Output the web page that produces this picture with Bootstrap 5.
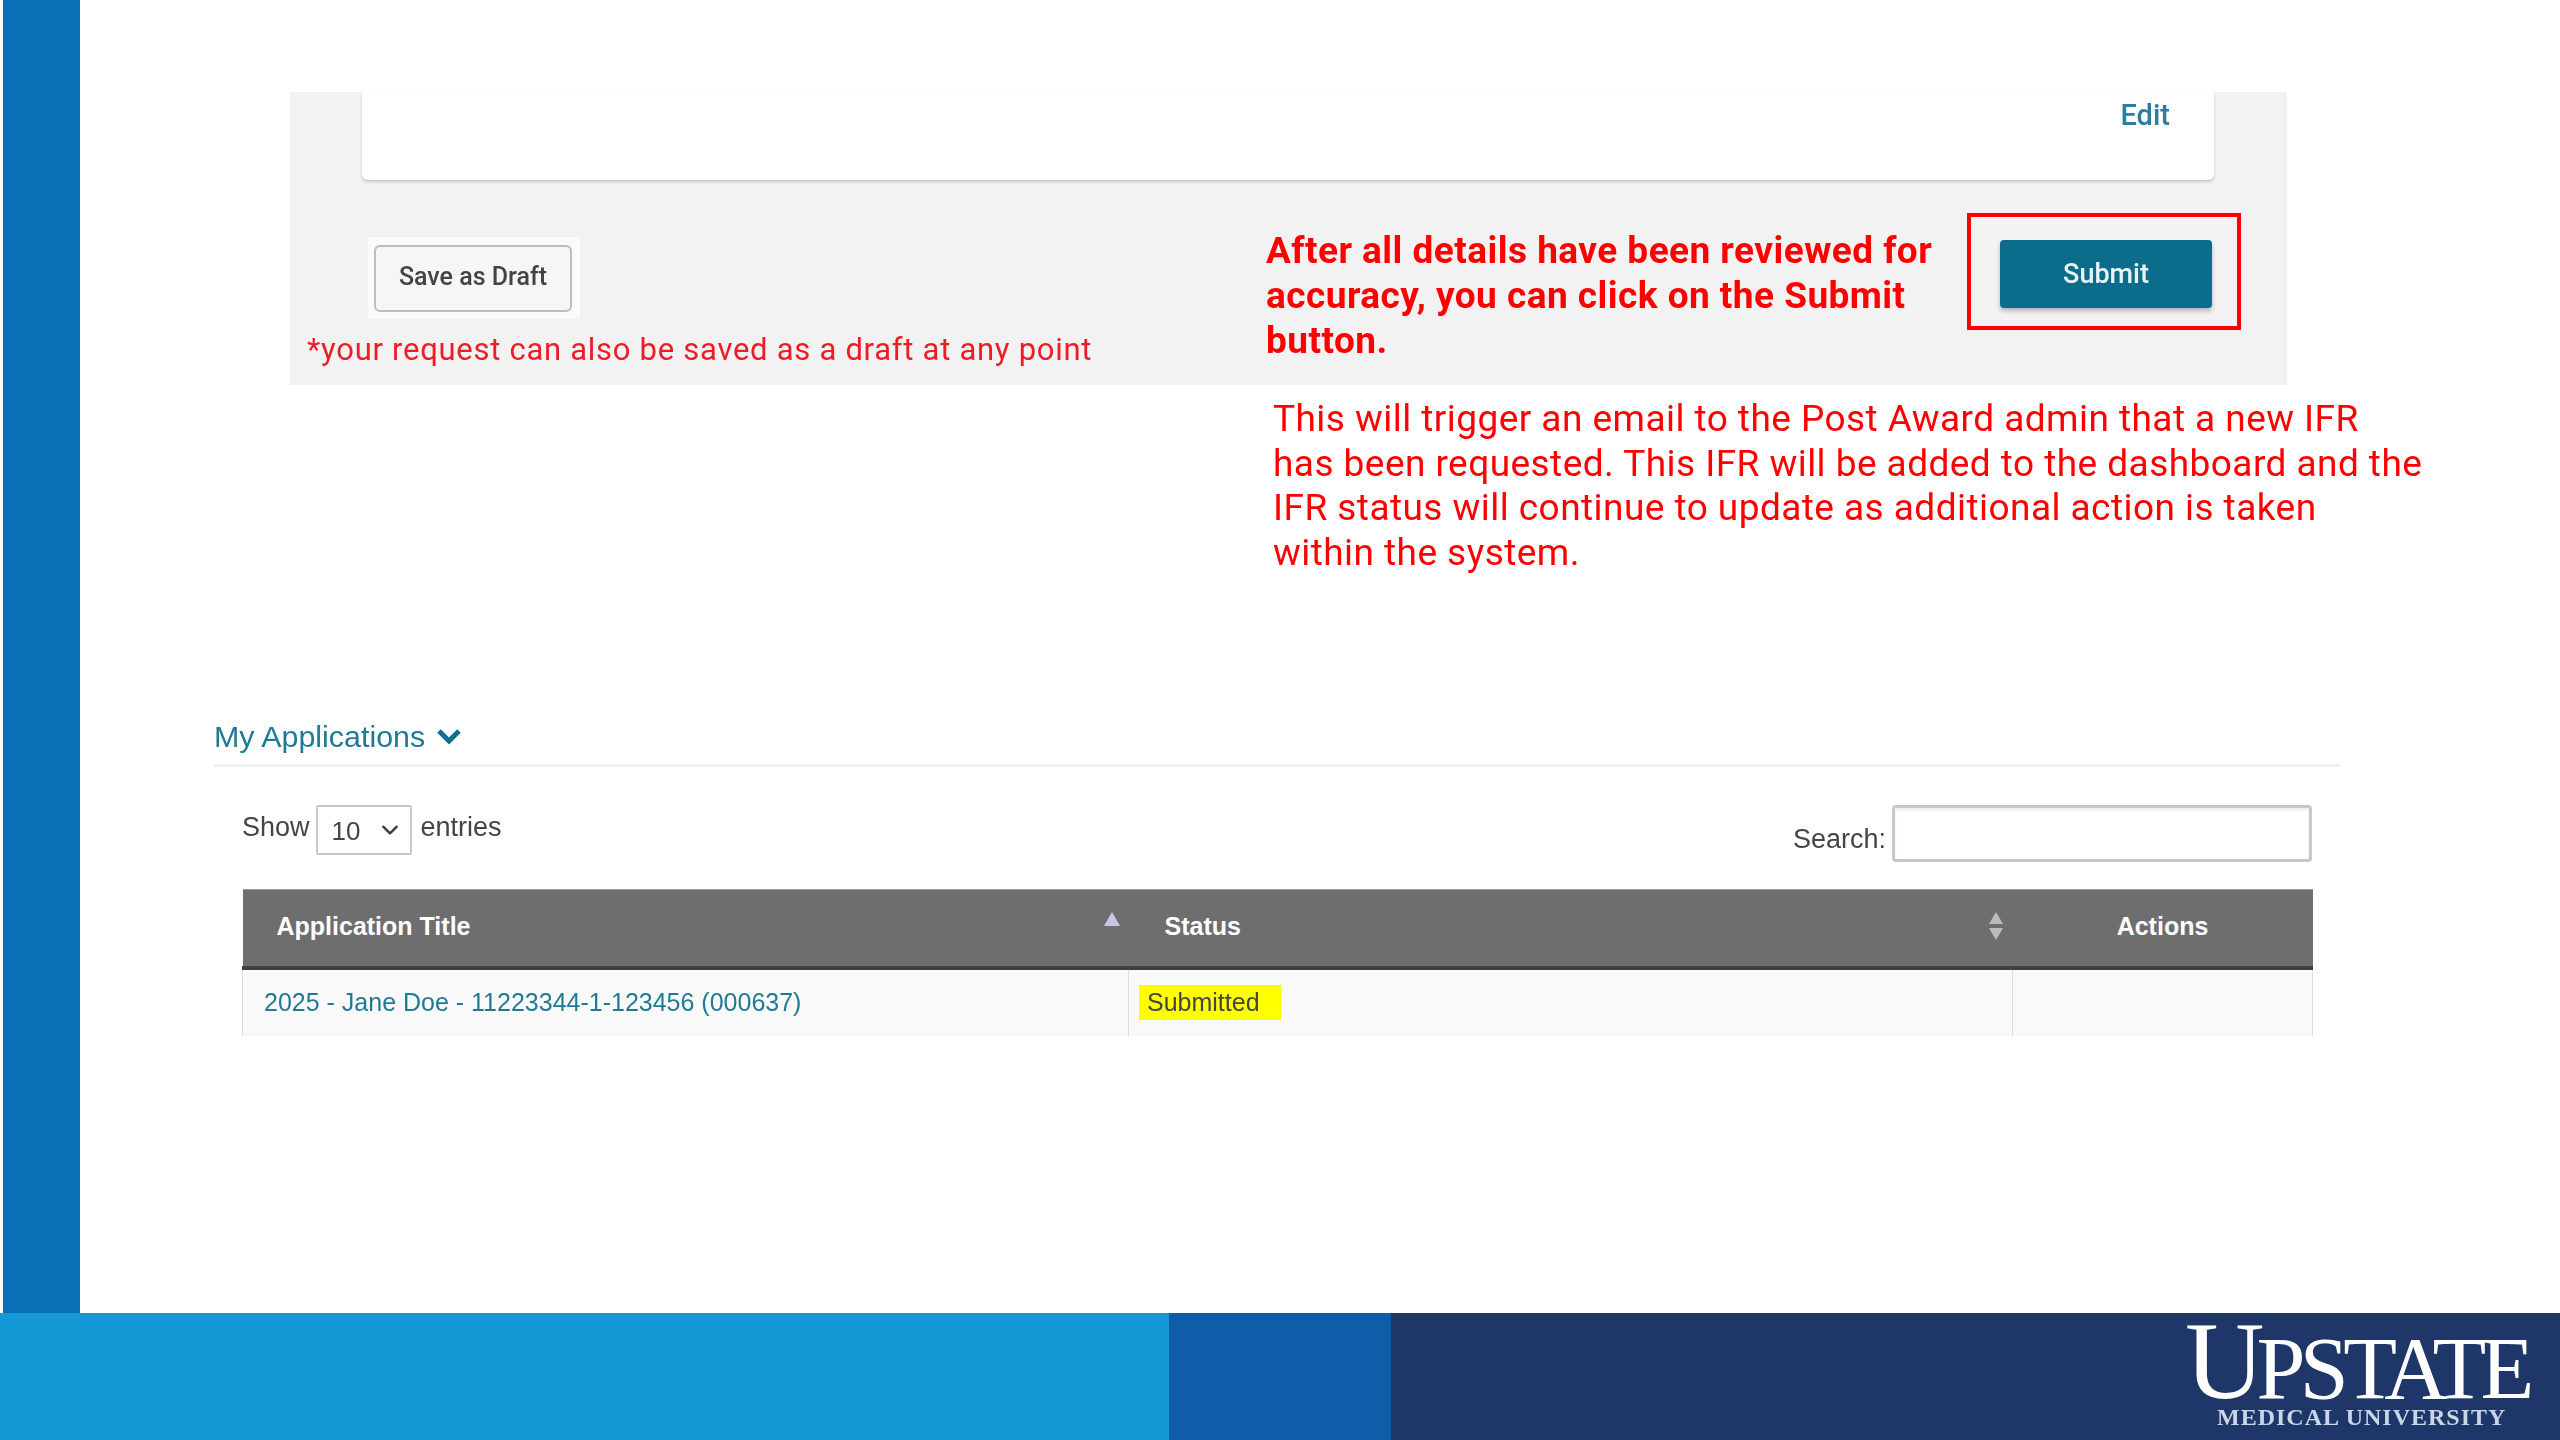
<!DOCTYPE html>
<html lang="en">
<head>
<meta charset="utf-8">
<title>Submit IFR</title>
<link href="https://cdn.jsdelivr.net/npm/bootstrap@5.3.0/dist/css/bootstrap.min.css" rel="stylesheet">
<style>
html,body{margin:0;background:#fff}
.slide-page{width:2560px;height:1440px;overflow:hidden;filter:blur(.6px)}
.slide-top{height:1313px}
.side-strip{width:77px;margin-left:3px;background:#0a70b8;flex:none}
.slide-main{width:2480px;padding-top:92px}
.gray-panel{margin-left:210px;width:1997px;height:293px;background:#f2f2f2;font-family:Roboto,sans-serif}
.top-card{margin:0 73px 0 72px;height:88px;background:#fff;border-radius:0 0 6px 6px;box-shadow:0 2px 3px rgba(0,0,0,.18);padding:3px 44px 0 0;text-align:right}
.edit-link{color:#2a7f9e;font-size:29px;font-weight:500;line-height:40px;text-decoration:none}
.action-row{margin-top:33px;padding-left:17px}
.draft-col{width:959px;padding-top:24px}
.draft-halo{margin-left:61px;width:212px;height:82px;background:#fafafa;padding:8px 6px}
.draft-btn{width:198px;height:67px;background:#f6f6f6;border:2px solid #bdbdbd;border-radius:6px;color:#444;font-size:25px;font-weight:500;padding:0 0 3px;--bs-btn-hover-bg:#eee;--bs-btn-hover-color:#444;--bs-btn-hover-border-color:#bdbdbd}
.draft-note{color:#ee1c25;font-size:31px;line-height:40px;margin-top:11px;white-space:nowrap;letter-spacing:.72px}
.bold-note{width:701px;padding-top:15px;color:#f00;font-size:37px;font-weight:700;line-height:45px;white-space:nowrap;letter-spacing:.46px}
.red-box{width:274px;height:117px;border:4px solid #f00;padding:23px 0 0 29px}
.submit-btn{width:212px;height:68px;background:#0b6c8c;border:0;border-radius:4px;color:#e8f3f6;font-size:27px;font-weight:500;padding:0;box-shadow:0 3px 4px rgba(0,0,0,.25);--bs-btn-hover-bg:#0b6c8c;--bs-btn-hover-color:#e8f3f6}
.email-note{margin:12px 0 0 1193px;color:#f00;font-family:Roboto,sans-serif;font-size:37px;line-height:44.6px;white-space:nowrap;letter-spacing:.45px}
.apps-section{margin:141px 0 0 134px;width:2126px;font-family:"Liberation Sans",Arial,sans-serif}
.apps-head{height:51px;border-bottom:3px solid #f0f0f0;color:#1f7a96;font-size:30.4px;line-height:40px}
.head-chevron{margin-left:4px}
.apps-controls{padding:38px 28px 0;height:95px;color:#444;font-size:27px}
.show-text{margin:2px 6px 0 0}
.entries-text{margin:2px 0 0 9px}
.entries-pick{width:96px;height:50px;border:2px solid #c8c8c8;border-radius:2px;padding:2px 10px 0 14px;font-size:26px;color:#444;background-position:right 8px center;background-size:24px 18px}
.search-text{margin:14px -2px 0 0}
.search-box{width:420px;height:57px;border:3px solid #c8c8c8;border-radius:4px;box-shadow:inset 0 2px 3px rgba(0,0,0,.08)}
.apps-table{margin:27px 28px 0;width:2070px;table-layout:fixed;font-size:25px;--bs-table-bg:transparent}
.apps-table thead th{height:78px;background:#6e6e6e;color:#fff;font-weight:700;border:0;border-top:1px solid #999;border-bottom:4px solid #3f3f3f;vertical-align:middle;position:relative;padding:0 0 3px 34px}
.apps-table thead th.col-status{padding-left:36px}
.apps-table tbody td{height:68px;background:#f9f9f9;border:0;border-left:1px solid #ddd;vertical-align:middle;padding:0 0 0 21px}
.apps-table tbody td:last-child{border-right:1px solid #ddd}
.apps-table thead th.col-actions{text-align:center;padding:0 0 3px}
.apps-table tbody td.cell-status{padding-left:10px}
.row-link{color:#1f7a96;text-decoration:none}
.status-flag{display:inline-block;background:#ff0;color:#444;padding:2px 21px 2px 8px;line-height:31px}
.sort-icon{position:absolute;top:22px}
.sort-up{right:9px}
.sort-both{right:9px;top:22px}
.foot-band{height:127px}
.foot-light{width:1169px;background:#1499d6}
.foot-mid{width:222px;background:#0f5ca8}
.foot-navy{width:1169px;background:#1f3668;color:#fff;font-family:"Liberation Serif",serif}
.logo-wrap{margin-left:794px;padding-top:6px;width:360px;white-space:nowrap}
.logo-word{font-size:88px;line-height:84px;letter-spacing:-5.6px;height:84px}
.logo-big{font-size:110px;letter-spacing:-8px}
.logo-sub{font-size:24px;line-height:24px;letter-spacing:1px;color:#c8d6e8;margin:2px 0 0 32px;font-weight:700}
</style>
</head>
<body>
<div class="slide-page d-flex flex-column">
  <div class="slide-top d-flex">
    <div class="side-strip"></div>
    <div class="slide-main">
      <div class="gray-panel">
        <div class="top-card"><a class="edit-link" href="#">Edit</a></div>
        <div class="action-row d-flex align-items-start">
          <div class="draft-col">
            <div class="draft-halo"><button type="button" class="btn draft-btn">Save as Draft</button></div>
            <div class="draft-note">*your request can also be saved as a draft at any point</div>
          </div>
          <div class="bold-note">After all details have been reviewed for<br>accuracy, you can click on the Submit<br>button.</div>
          <div class="red-box"><button type="button" class="btn submit-btn">Submit</button></div>
        </div>
      </div>
      <div class="email-note">This will trigger an email to the Post Award admin that a new IFR<br>has been requested. This IFR will be added to the dashboard and the<br>IFR status will continue to update as additional action is taken<br>within the system.</div>
      <div class="apps-section">
        <div class="apps-head d-flex align-items-start gap-2">
          <span>My Applications</span>
          <svg class="head-chevron" width="24" height="40" viewBox="0 0 24 40" aria-hidden="true"><polyline points="2,15 12,25 22,15" fill="none" stroke="#0f6f8c" stroke-width="5"/></svg>
        </div>
        <div class="apps-controls d-flex justify-content-between">
          <div class="d-flex align-items-start">
            <span class="show-text">Show</span>
            <select class="form-select entries-pick" aria-label="Entries"><option>10</option></select>
            <span class="entries-text">entries</span>
          </div>
          <div class="d-flex align-items-start gap-2">
            <label class="search-text" for="srch">Search:</label>
            <input id="srch" class="form-control search-box" type="text">
          </div>
        </div>
        <table class="table apps-table mb-0">
          <colgroup><col style="width:886px"><col style="width:884px"><col style="width:300px"></colgroup>
          <thead>
            <tr>
              <th>Application Title
                <svg class="sort-icon sort-up" width="16" height="14" viewBox="0 0 16 14" aria-hidden="true"><polygon points="8,0 16,14 0,14" fill="#c9c6e8"/></svg>
              </th>
              <th class="col-status">Status
                <svg class="sort-icon sort-both" width="16" height="28" viewBox="0 0 16 28" aria-hidden="true"><polygon points="8,0 15,12 1,12" fill="#bbb"/><polygon points="1,16 15,16 8,28" fill="#bbb"/></svg>
              </th>
              <th class="col-actions">Actions</th>
            </tr>
          </thead>
          <tbody>
            <tr>
              <td><a class="row-link" href="#">2025 - Jane Doe - 11223344-1-123456 (000637)</a></td>
              <td class="cell-status"><span class="status-flag">Submitted</span></td>
              <td></td>
            </tr>
          </tbody>
        </table>
      </div>
    </div>
  </div>
  <div class="foot-band d-flex">
    <div class="foot-light"></div>
    <div class="foot-mid"></div>
    <div class="foot-navy">
      <div class="logo-wrap">
        <div class="logo-word"><span class="logo-big">U</span>PSTATE</div>
        <div class="logo-sub">MEDICAL UNIVERSITY</div>
      </div>
    </div>
  </div>
</div>
<script src="https://cdn.jsdelivr.net/npm/bootstrap@5.3.0/dist/js/bootstrap.bundle.min.js"></script>
</body>
</html>
